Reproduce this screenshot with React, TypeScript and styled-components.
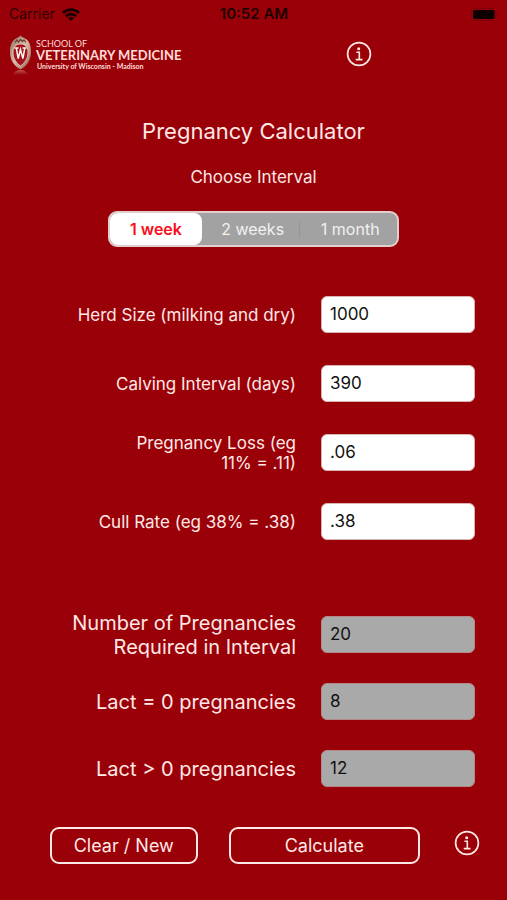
import React, { useState } from "react";
import styled, { createGlobalStyle, css } from "styled-components";

const GlobalStyle = createGlobalStyle`
  *, *::before, *::after { box-sizing: border-box; }
  html, body { margin: 0; background: #9a0007; }
  body, button, input { font-family: Inter, "Liberation Sans", sans-serif; }
`;

const Screen = styled.div`
  min-height: 100vh;
  display: flex;
  flex-direction: column;
  background: #9a0007;
  color: #ffe8e6;
`;

const StatusBar = styled.header`
  display: grid;
  grid-template-columns: 1fr auto 1fr;
  align-items: center;
  height: 28px;
  padding: 0 8px 0 9px;
  color: #1c0001;
  font-size: 14px;
  line-height: 20px;
`;

const Carrier = styled.div`
  display: flex;
  align-items: center;
  gap: 7px;
  color: #2c0002;
`;

const Clock = styled.time`
  font-size: 15px;
  font-weight: 600;
`;

const BatterySlot = styled.div`
  display: flex;
  justify-content: flex-end;
`;

const BrandBar = styled.div`
  display: flex;
  align-items: center;
  justify-content: space-between;
  height: 52px;
  padding: 0 132px 0 9px;
`;

const Brand = styled.div`
  display: flex;
  align-items: flex-start;
  gap: 4px;
  height: 42px;
`;

const BrandText = styled.div`
  display: flex;
  flex-direction: column;
  padding-top: 6px;
  font-family: Lato, "Open Sans", sans-serif;
  color: #ffdcd8;
  white-space: nowrap;
`;

const BrandSmall = styled.span`
  font-size: 9px;
  line-height: 10px;
`;

const BrandName = styled.span`
  font-size: 13px;
  line-height: 13px;
  font-weight: 700;
`;

const BrandCampus = styled.span`
  padding-left: 1px;
  font-size: 7px;
  line-height: 9px;
  font-weight: 700;
`;

const IconButton = styled.button`
  display: flex;
  padding: 3px;
  border: 0;
  background: none;
  color: #ffe8e6;
  cursor: pointer;
`;

const Title = styled.h1`
  margin: 36px 0 0;
  font-size: 22px;
  line-height: 30px;
  font-weight: 400;
  text-align: center;
`;

const IntervalGroup = styled.fieldset`
  display: flex;
  flex-direction: column;
  align-items: center;
  margin: 0;
  padding: 0 108px;
  border: 0;
`;

const IntervalLegend = styled.legend`
  margin: 0 auto;
  padding: 20px 0 23px;
  font-size: 17px;
  line-height: 22px;
`;

const Segments = styled.div`
  display: flex;
  width: 100%;
  height: 36px;
  border: 2px solid #e3cfcf;
  border-radius: 9px;
  background: #a2a2a2;
`;

const Segment = styled.label<{ $divided: boolean }>`
  display: flex;
  flex: 1 1 0;
  align-items: center;
  justify-content: center;
  padding-left: 4px;
  border-radius: 8px;
  color: #f1f1f1;
  font-size: 16px;
  line-height: 20px;
  white-space: nowrap;
  cursor: pointer;

  &:has(input:checked) {
    flex: 0 0 32%;
    padding-left: 0;
    background: #fff;
    color: #fb0d1b;
    font-weight: 600;
  }

  ${(p) =>
    p.$divided &&
    css`
      &:not(:has(input:checked)) {
        background: linear-gradient(#969696, #969696) left center / 1px 16px no-repeat;
      }
    `}
`;

const HiddenRadio = styled.input`
  appearance: none;
  width: 0;
  height: 0;
  margin: 0;
`;

const FieldList = styled.div<{ $gap: number; $top: number }>`
  display: flex;
  flex-direction: column;
  gap: ${(p) => p.$gap}px;
  margin-top: ${(p) => p.$top}px;
  padding: 0 32px 0 64px;
`;

const FieldRow = styled.div`
  display: grid;
  grid-template-columns: minmax(0, 1fr) 154px;
  grid-template-rows: 37px;
  align-items: center;
  column-gap: 25px;
`;

const FieldLabel = styled.label<{ $large?: boolean }>`
  text-align: right;
  font-size: ${(p) => (p.$large ? 20 : 17)}px;
  line-height: ${(p) => (p.$large ? 24 : 20)}px;
`;

const FieldInput = styled.input`
  width: 100%;
  height: 37px;
  padding: 0 8px 2px;
  border: 1px solid #d9b4b4;
  border-radius: 6px;
  background: #fff;
  color: #111;
  font-size: 17px;

  &:read-only {
    border-color: #b58a8a;
    background: #a9a9a9;
  }
`;

const Actions = styled.div`
  display: flex;
  align-items: flex-start;
  gap: 31px;
  margin-top: 40px;
  padding: 0 24px 0 50px;
`;

const ActionButton = styled.button<{ $grow: number }>`
  flex: ${(p) => p.$grow} 1 0;
  height: 37px;
  padding: 0;
  border: 2px solid #ffe8e6;
  border-radius: 9px;
  background: transparent;
  color: #ffe8e6;
  font-size: 18px;
  line-height: 24px;
  cursor: pointer;
`;

const WifiIcon = () => (
  <svg width="18" height="13" viewBox="0 0 18 13" fill="none" stroke="#1c0001" strokeWidth="2.8" aria-hidden="true">
    <path d="M1 4.9a11.4 11.4 0 0 1 16 0" />
    <path d="M4 8.2a7.2 7.2 0 0 1 10 0" />
    <path d="M9 13 6.2 10.200a4 4 0 0 1 5.600 0z" fill="#1c0001" stroke="none" />
  </svg>
);

const BatteryIcon = () => (
  <svg width="28" height="13" viewBox="0 0 28 13" aria-hidden="true">
    <rect x="0.5" y="0.5" width="24" height="12" rx="3.5" fill="none" stroke="#82000a" />
    <rect x="2" y="2" width="21.5" height="9" rx="2" fill="#0c0000" />
    <path d="M26 4.5c1.6.6 1.6 3.4 0 4z" fill="#7a0006" />
  </svg>
);

const InfoIcon = () => (
  <svg width="26" height="26" viewBox="0 0 26 26" fill="none" stroke="currentColor" aria-hidden="true">
    <circle cx="13" cy="13" r="11.4" strokeWidth="1.7" />
    <circle cx="12.7" cy="7.7" r="1.5" fill="currentColor" stroke="none" />
    <path d="M10.4 11.3h2.9v7M9.7 18.6h6.8" strokeWidth="1.6" />
  </svg>
);

const CrestIcon = () => (
  <svg width="23" height="42" viewBox="0 0 23 42" aria-hidden="true">
    <defs>
      <linearGradient id="crest-rim" x1="0" y1="0" x2="1" y2="1">
        <stop offset="0" stopColor="#8f6a58" />
        <stop offset="0.5" stopColor="#d9bba8" />
        <stop offset="1" stopColor="#8a5a4c" />
      </linearGradient>
      <linearGradient id="crest-shadow" x1="0" y1="0" x2="0" y2="1">
        <stop offset="0" stopColor="#d9a096" stopOpacity="0.5" />
        <stop offset="1" stopColor="#d9a096" stopOpacity="0" />
      </linearGradient>
    </defs>
    <g transform="translate(0 2)">
      <path d="M11.5 0.5c1.5 2 3.5 2.2 5.5 3.5 4 3 5 8 5 13 0 8-4 14-10.5 17.5C5 31 1 25 1 17 1 12 2 7 6 4c2-1.3 4-1.5 5.5-3.5z" fill="url(#crest-rim)" />
      <path d="M11.5 9c4.700 0 7.500 3 7.500 8.500 0 5.500-3 10.500-7.500 13.500C7 28 4 23 4 17.500 4 12 6.800 9 11.500 9z" fill="#a3141c" stroke="#f2dccb" strokeWidth="0.8" />
      <path d="M6 7.5 8 5l1.5 2 2-2.500 2 2L15 5l2 2.500" fill="none" stroke="#6b3a30" strokeWidth="1.2" />
      <path d="M5.5 13h4M13.5 13h4M7.3 13l1.9 10.500 2.300-9 2.400 9 1.900-10.500" fill="none" stroke="#fff3ee" strokeWidth="1.5" />
    </g>
    <path d="M4 42c1-3.5 4-5 7.5-5s6.5 1.5 7.5 5z" fill="url(#crest-shadow)" />
  </svg>
);

const intervals = ["1 week", "2 weeks", "1 month"];
const intervalDays = [7, 14, 30];

const inputFields = [
  { id: "herd", label: "Herd Size (milking and dry)", initial: "1000" },
  { id: "calving", label: "Calving Interval (days)", initial: "390" },
  { id: "loss", label: "Pregnancy Loss (eg 11%\u00a0=\u00a0.11)", initial: ".06" },
  { id: "cull", label: "Cull Rate (eg 38% = .38)", initial: ".38" },
];

const resultFields = [
  { id: "total", label: "Number of Pregnancies Required in Interval" },
  { id: "lactZero", label: "Lact = 0 pregnancies" },
  { id: "lactMore", label: "Lact > 0 pregnancies" },
];

type Values = Record<string, string>;

const initialValues: Values = Object.fromEntries(inputFields.map((f) => [f.id, f.initial]));

function calculate(values: Values, days: number): Values {
  const herd = Number(values.herd);
  const total = Math.round((herd / Number(values.calving)) * days * (1 + Number(values.loss)) * 1.05);
  const lactZero = Math.round((herd * Number(values.cull) * days * (1 + Number(values.loss))) / 365);
  if (!Number.isFinite(total) || !Number.isFinite(lactZero)) return {};
  return { total: String(total), lactZero: String(lactZero), lactMore: String(total - lactZero) };
}

export default function App() {
  const [interval, setIntervalIndex] = useState(0);
  const [values, setValues] = useState<Values>(initialValues);
  const [results, setResults] = useState<Values>({ total: "20", lactZero: "8", lactMore: "12" });

  const clear = () => {
    setValues({});
    setResults({});
  };

  return (
    <Screen>
      <GlobalStyle />
      <StatusBar>
        <Carrier>
          Carrier
          <WifiIcon />
        </Carrier>
        <Clock>10:52 AM</Clock>
        <BatterySlot>
          <BatteryIcon />
        </BatterySlot>
      </StatusBar>
      <BrandBar>
        <Brand>
          <CrestIcon />
          <BrandText>
            <BrandSmall>SCHOOL OF</BrandSmall>
            <BrandName>VETERINARY MEDICINE</BrandName>
            <BrandCampus>University of Wisconsin - Madison</BrandCampus>
          </BrandText>
        </Brand>
        <IconButton type="button" aria-label="About">
          <InfoIcon />
        </IconButton>
      </BrandBar>
      <main>
        <Title>Pregnancy Calculator</Title>
        <IntervalGroup>
          <IntervalLegend>Choose Interval</IntervalLegend>
          <Segments>
            {intervals.map((name, i) => (
              <Segment key={name} $divided={i === 2}>
                <HiddenRadio
                  type="radio"
                  name="interval"
                  checked={interval === i}
                  onChange={() => setIntervalIndex(i)}
                />
                {name}
              </Segment>
            ))}
          </Segments>
        </IntervalGroup>
        <FieldList $gap={32} $top={49}>
          {inputFields.map((f) => (
            <FieldRow key={f.id}>
              <FieldLabel htmlFor={f.id}>{f.label}</FieldLabel>
              <FieldInput
                id={f.id}
                inputMode="decimal"
                value={values[f.id] ?? ""}
                onChange={(e) => setValues({ ...values, [f.id]: e.target.value })}
              />
            </FieldRow>
          ))}
        </FieldList>
        <FieldList $gap={30} $top={76}>
          {resultFields.map((f) => (
            <FieldRow key={f.id}>
              <FieldLabel htmlFor={f.id} $large>
                {f.label}
              </FieldLabel>
              <FieldInput id={f.id} readOnly value={results[f.id] ?? ""} />
            </FieldRow>
          ))}
        </FieldList>
        <Actions>
          <ActionButton type="button" $grow={147} onClick={clear}>
            Clear / New
          </ActionButton>
          <ActionButton
            type="button"
            $grow={192}
            onClick={() => setResults(calculate(values, intervalDays[interval]))}
          >
            Calculate
          </ActionButton>
          <IconButton type="button" aria-label="Calculation help">
            <InfoIcon />
          </IconButton>
        </Actions>
      </main>
    </Screen>
  );
}
